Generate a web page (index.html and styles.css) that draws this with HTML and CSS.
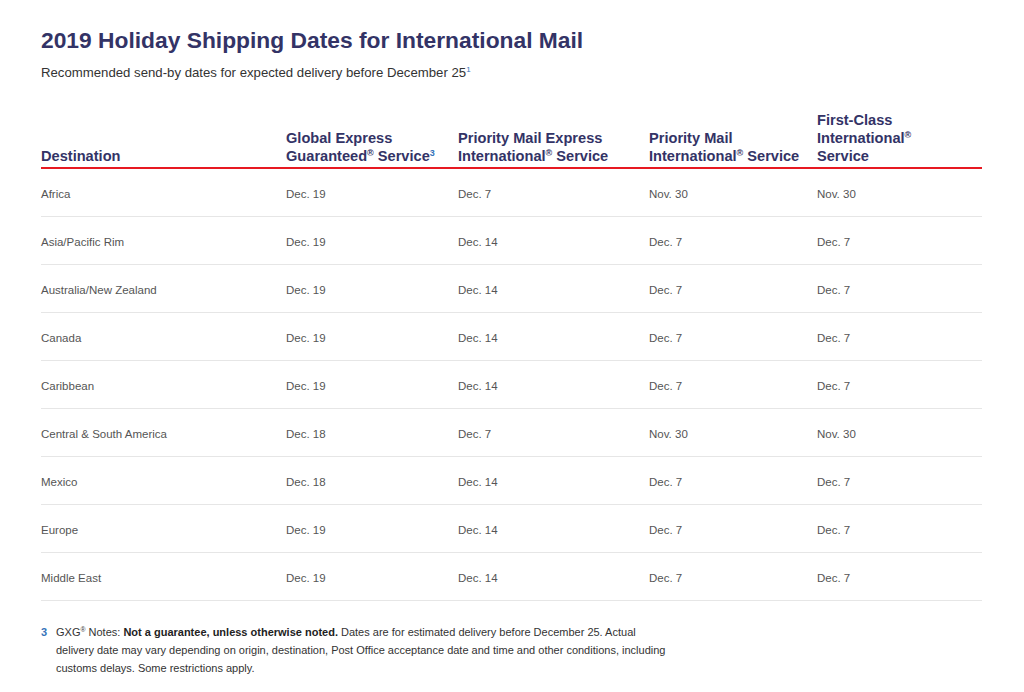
FILE: index.html
```html
<!DOCTYPE html>
<html lang="en">
<head>
<meta charset="utf-8">
<title>2019 Holiday Shipping Dates for International Mail</title>
<link rel="stylesheet" href="styles.css">
</head>
<body>
<main class="page">
  <h1 class="title">2019 Holiday Shipping Dates for International Mail</h1>
  <p class="subtitle">Recommended send-by dates for expected delivery before December 25<sup class="ref">1</sup></p>
  <table class="dates">
    <thead>
      <tr>
        <th class="c1">Destination</th>
        <th class="c2">Global Express<br>Guaranteed<sup class="reg">®</sup> Service<sup class="ref">3</sup></th>
        <th class="c3">Priority Mail Express<br>International<sup class="reg">®</sup> Service</th>
        <th class="c4">Priority Mail<br>International<sup class="reg">®</sup> Service</th>
        <th class="c5">First-Class<br>International<sup class="reg">®</sup><br>Service</th>
      </tr>
    </thead>
    <tbody>
      <tr><td>Africa</td><td>Dec. 19</td><td>Dec. 7</td><td>Nov. 30</td><td>Nov. 30</td></tr>
      <tr><td>Asia/Pacific Rim</td><td>Dec. 19</td><td>Dec. 14</td><td>Dec. 7</td><td>Dec. 7</td></tr>
      <tr><td>Australia/New Zealand</td><td>Dec. 19</td><td>Dec. 14</td><td>Dec. 7</td><td>Dec. 7</td></tr>
      <tr><td>Canada</td><td>Dec. 19</td><td>Dec. 14</td><td>Dec. 7</td><td>Dec. 7</td></tr>
      <tr><td>Caribbean</td><td>Dec. 19</td><td>Dec. 14</td><td>Dec. 7</td><td>Dec. 7</td></tr>
      <tr><td>Central &amp; South America</td><td>Dec. 18</td><td>Dec. 7</td><td>Nov. 30</td><td>Nov. 30</td></tr>
      <tr><td>Mexico</td><td>Dec. 18</td><td>Dec. 14</td><td>Dec. 7</td><td>Dec. 7</td></tr>
      <tr><td>Europe</td><td>Dec. 19</td><td>Dec. 14</td><td>Dec. 7</td><td>Dec. 7</td></tr>
      <tr><td>Middle East</td><td>Dec. 19</td><td>Dec. 14</td><td>Dec. 7</td><td>Dec. 7</td></tr>
    </tbody>
  </table>
  <div class="note">
    <span class="note-num">3</span>
    <p class="note-text">GXG<sup class="reg">®</sup> Notes: <strong>Not a guarantee, unless otherwise noted.</strong> Dates are for estimated delivery before December 25. Actual delivery date may vary depending on origin, destination, Post Office acceptance date and time and other conditions, including customs delays. Some restrictions apply.</p>
  </div>
</main>
</body>
</html>
```
FILE: styles.css
```css
html, body {
  margin: 0;
  padding: 0;
  background: #ffffff;
}
body {
  font-family: "Liberation Sans", Arial, sans-serif;
  color: #333333;
}
.page {
  padding: 27px 42px 0 41px;
}
.title {
  margin: 0;
  font-size: 22.8px;
  line-height: 27px;
  font-weight: bold;
  color: #333366;
}
.subtitle {
  margin: 11px 0 0 0;
  font-size: 13.2px;
  line-height: 16px;
  color: #333333;
}
sup {
  line-height: 0;
}
.ref {
  font-size: 8px;
  color: #3573b9;
  vertical-align: 0.6em;
}
.reg {
  font-size: 0.62em;
  vertical-align: 0.55em;
}
.dates {
  width: 941px;
  border-collapse: collapse;
  margin-top: 30px;
  table-layout: fixed;
}
.dates th {
  text-align: left;
  vertical-align: bottom;
  font-size: 14.6px;
  line-height: 18px;
  font-weight: bold;
  color: #333366;
  padding: 0 0 2px 0;
  border-bottom: 2px solid #e71921;
}
.dates th .ref {
  font-size: 9px;
}
.dates th.c1 { width: 245px; }
.dates th.c2 { width: 172px; }
.dates th.c3 { width: 191px; }
.dates th.c4 { width: 168px; }
.dates td {
  font-size: 11.5px;
  line-height: 16px;
  color: #555555;
  padding: 17px 0 14px 0;
  border-bottom: 1px solid #e6e6e6;
  vertical-align: middle;
}
.note {
  display: flex;
  margin-top: 22px;
  gap: 8px;
  font-size: 11px;
  line-height: 18px;
}
.note-num {
  color: #3573b9;
  font-weight: bold;
  width: 7px;
}
.note-text {
  margin: 0;
  width: 615px;
  color: #333333;
}
.note-text strong {
  color: #222222;
}
```
